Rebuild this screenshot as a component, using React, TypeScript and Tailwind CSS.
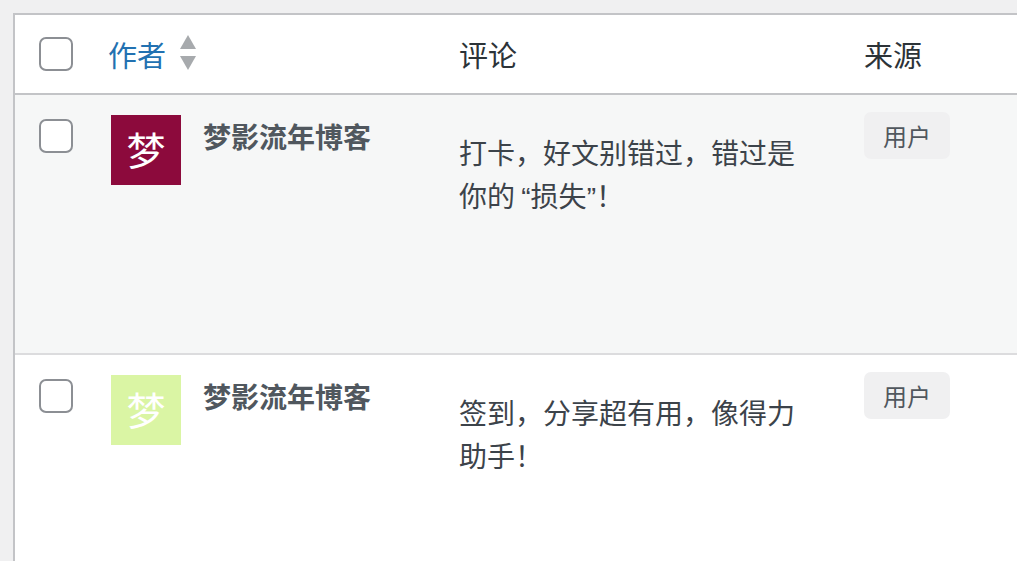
import React from "react";

const cjk = { fontFamily: '"Noto Sans CJK SC", "Noto Sans", sans-serif' };
const latin = { fontFamily: '"Liberation Sans", "Noto Sans", sans-serif' };

type Row = {
  name: string;
  avatarBg: string;
  comment: React.ReactNode[];
  striped: boolean;
};

const rows: Row[] = [
  {
    name: "梦影流年博客",
    avatarBg: "bg-[#8c0a3c]",
    comment: [
      "打卡，好文别错过，错过是",
      <>
        你的 <span style={latin}>“</span>损失<span style={latin}>”</span>！
      </>,
    ],
    striped: true,
  },
  {
    name: "梦影流年博客",
    avatarBg: "bg-[#daf5a4]",
    comment: ["签到，分享超有用，像得力", "助手！"],
    striped: false,
  },
];

function Checkbox() {
  return <div className="w-[34px] h-[34px] rounded-[7px] border-2 border-[#8c8f94] bg-white" />;
}

function SortIcon() {
  return (
    <svg width="20" height="38" viewBox="0 0 20 38" className="ml-[12px]">
      <polygon points="10,0 18,14 2,14" fill="#a7aaad" />
      <polygon points="2,21 18,21 10,35" fill="#a7aaad" />
    </svg>
  );
}

export default function App() {
  return (
    <div className="min-h-screen bg-[#f0f0f1] pt-[13px] pl-[13px]" style={cjk}>
      <div className="bg-white border-t-2 border-l-2 border-[#c3c4c7] h-[548px] overflow-hidden">
        {/* header */}
        <div className="flex items-center h-[80px] border-b-2 border-[#c3c4c7]">
          <div className="w-[93px] pl-[24px]">
            <Checkbox />
          </div>
          <div className="w-[351px] flex items-center">
            <span className="text-[29px] text-[#2271b1] leading-none">作者</span>
            <SortIcon />
          </div>
          <div className="w-[405px] text-[29px] text-[#2c3338] leading-none">评论</div>
          <div className="text-[29px] text-[#2c3338] leading-none">来源</div>
        </div>

        {rows.map((r, i) => (
          <div
            key={i}
            className={`flex h-[260px] ${r.striped ? "bg-[#f6f7f7] border-b-2 border-[#dcdcde]" : "bg-white"}`}
          >
            <div className="w-[93px] pl-[24px] pt-[24px]">
              <Checkbox />
            </div>
            <div className="w-[351px] flex pt-[20px] pl-[3px]">
              <div
                className={`w-[70px] h-[70px] ${r.avatarBg} flex items-center justify-center text-white text-[39px] leading-none pb-[4px]`}
              >
                梦
              </div>
              <div className="ml-[22px] pt-[5px] text-[28px] font-bold text-[#50575e] leading-[32px]">
                {r.name}
              </div>
            </div>
            <div className="w-[405px] pt-[36px] text-[28px] leading-[43px] text-[#3c434a]">
              {r.comment.map((l, j) => (
                <div key={j}>{l}</div>
              ))}
            </div>
            <div className="pt-[17px]">
              <div className="h-[47px] px-[19px] rounded-[7px] bg-[#f0f0f1] text-[#50575e] text-[24px] flex items-center">
                用户
              </div>
            </div>
          </div>
        ))}
      </div>
    </div>
  );
}
